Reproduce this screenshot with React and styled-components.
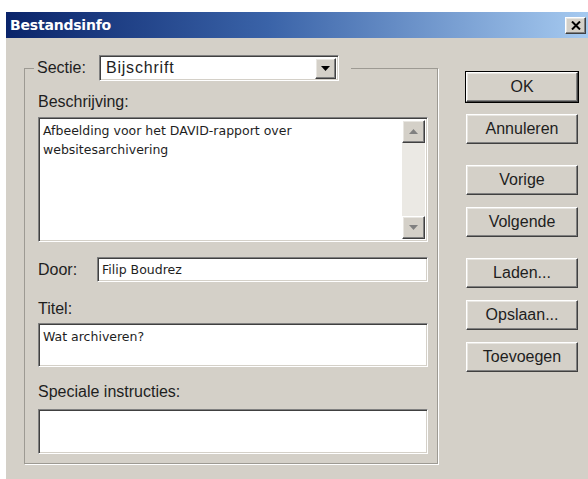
import React from 'react';
import styled, { createGlobalStyle, css } from 'styled-components';

const GlobalStyle = createGlobalStyle`
    html, body {
        margin: 0;
        background: #fff;
    }
`;

const raised = css`
    border: 1px solid;
    border-color: #fff #404040 #404040 #fff;
    box-shadow: inset -1px -1px 0 #808080, inset 1px 1px 0 #e8e6e1;
`;

const sunken = css`
    border: 1px solid;
    border-color: #808080 #fff #fff #808080;
    box-shadow: inset 1px 1px 0 #404040, inset -1px -1px 0 #d4d0c8;
`;

const Window = styled.div`
    margin: 12px 0 0 6px;
    width: 582px;
    height: 467px;
    background: #d4d0c8;
    font-family: "Liberation Sans", Arial, sans-serif;
    color: #1e1e1e;
    overflow: hidden;
`;

const TitleBar = styled.div`
    height: 26px;
    display: flex;
    align-items: center;
    justify-content: space-between;
    padding: 0 2px 0 4px;
    background: linear-gradient(90deg, #0a246a 0%, #3a63a8 45%, #a6caf0 100%);
`;

const Title = styled.span`
    color: #fff;
    font-family: "DejaVu Sans", Verdana, sans-serif;
    font-weight: bold;
    font-size: 14px;
    letter-spacing: -0.2px;
`;

const CloseButton = styled.div`
    ${raised};
    width: 19px;
    height: 15px;
    background: #d4d0c8;
    display: flex;
    align-items: center;
    justify-content: center;
`;

const Body = styled.div`
    display: flex;
    gap: 28px;
    padding: 17px 0 0 18px;
`;

const Group = styled.fieldset`
    box-sizing: border-box;
    width: 414px;
    margin: 0;
    padding: 12px 9px 9px 13px;
    border: 1px solid #9d9a93;
    box-shadow: 1px 1px 0 #fff;
    display: flex;
    flex-direction: column;
`;

const Legend = styled.legend`
    display: flex;
    align-items: center;
    gap: 13px;
    padding: 0 12px 0 3px;
    margin-left: -4px;
`;

const Label = styled.div`
    font-size: 16px;
    line-height: 18px;
    margin-top: ${p => p.$top || 0}px;
    width: ${p => (p.$width ? `${p.$width}px` : 'auto')};
    flex-shrink: 0;
`;

const Select = styled.div`
    ${sunken};
    box-sizing: border-box;
    width: 240px;
    height: 26px;
    background: #fff;
    display: flex;
    align-items: center;
    justify-content: space-between;
    padding: 2px;
`;

const SelectText = styled.span`
    font-size: 16px;
    letter-spacing: 0.8px;
    padding-left: 4px;
`;

const DropButton = styled.div`
    ${raised};
    box-sizing: border-box;
    width: 21px;
    height: 21px;
    background: #d4d0c8;
    display: flex;
    align-items: center;
    justify-content: center;
`;

const Field = styled.div`
    ${sunken};
    box-sizing: border-box;
    background: #fff;
    height: ${p => p.$height}px;
    margin-top: ${p => p.$top || 0}px;
    flex: ${p => (p.$grow ? 1 : 'none')};
    display: flex;
    font-family: "DejaVu Sans", Verdana, sans-serif;
    font-size: 12.5px;
    line-height: 19px;
`;

const FieldText = styled.div`
    flex: 1;
    padding: 3px 4px;
    align-self: ${p => (p.$center ? 'center' : 'flex-start')};
`;

const Row = styled.div`
    display: flex;
    align-items: center;
    margin-top: ${p => p.$top || 0}px;
`;

const ScrollBar = styled.div`
    width: 23px;
    margin: 2px 2px 2px 0;
    display: flex;
    flex-direction: column;
    justify-content: space-between;
    background: #ebe9e4;
`;

const ScrollButton = styled.div`
    ${raised};
    box-sizing: border-box;
    height: 23px;
    background: #d4d0c8;
    display: flex;
    align-items: center;
    justify-content: center;
`;

const ButtonColumn = styled.div`
    display: flex;
    flex-direction: column;
    gap: 21px;
    margin-top: 17px;
`;

const ButtonGroup = styled.div`
    display: flex;
    flex-direction: column;
    gap: 12px;
`;

const Button = styled.div`
    ${raised};
    box-sizing: border-box;
    width: 112px;
    height: 30px;
    background: #d4d0c8;
    display: flex;
    align-items: center;
    justify-content: center;
    font-size: 16px;
    ${p => p.$default && css`
        outline: 1px solid #000;
        outline-offset: 0;
    `}
`;

const Arrow = ({ up, tone = '#000' }) => (
    <svg width="9" height="5" viewBox="0 0 9 5">
        <path d={up ? 'M0 5 L4.5 0 L9 5 Z' : 'M0 0 L4.5 5 L9 0 Z'} fill={tone} />
    </svg>
);

const CloseIcon = () => (
    <svg width="10" height="9" viewBox="0 0 10 9">
        <path d="M1 0.5 L9 8.5 M9 0.5 L1 8.5" stroke="#000" strokeWidth="2" />
    </svg>
);

const App = () => {
    return (
        <Window>
            <GlobalStyle />
            <TitleBar>
                <Title>Bestandsinfo</Title>
                <CloseButton><CloseIcon /></CloseButton>
            </TitleBar>
            <Body>
                <Group>
                    <Legend>
                        <Label>Sectie:</Label>
                        <Select>
                            <SelectText>Bijschrift</SelectText>
                            <DropButton><Arrow /></DropButton>
                        </Select>
                    </Legend>

                    <Label>Beschrijving:</Label>
                    <Field $height={125} $top={6}>
                        <FieldText>
                            Afbeelding voor het DAVID-rapport over websitesarchivering
                        </FieldText>
                        <ScrollBar>
                            <ScrollButton><Arrow up tone="#808080" /></ScrollButton>
                            <ScrollButton><Arrow tone="#808080" /></ScrollButton>
                        </ScrollBar>
                    </Field>

                    <Row $top={15}>
                        <Label $width={59}>Door:</Label>
                        <Field $height={25} $grow>
                            <FieldText $center>Filip Boudrez</FieldText>
                        </Field>
                    </Row>

                    <Label $top={18}>Titel:</Label>
                    <Field $height={44} $top={5}>
                        <FieldText>Wat archiveren?</FieldText>
                    </Field>

                    <Label $top={16}>Speciale instructies:</Label>
                    <Field $height={45} $top={8} />
                </Group>

                <ButtonColumn>
                    <ButtonGroup>
                        <Button $default>OK</Button>
                        <Button>Annuleren</Button>
                    </ButtonGroup>
                    <ButtonGroup>
                        <Button>Vorige</Button>
                        <Button>Volgende</Button>
                    </ButtonGroup>
                    <ButtonGroup>
                        <Button>Laden...</Button>
                        <Button>Opslaan...</Button>
                        <Button>Toevoegen</Button>
                    </ButtonGroup>
                </ButtonColumn>
            </Body>
        </Window>
    );
};

export default App;
